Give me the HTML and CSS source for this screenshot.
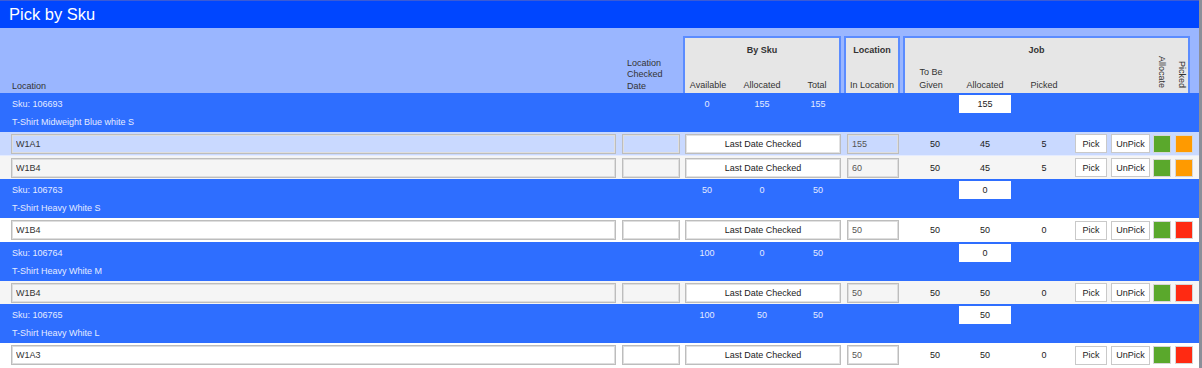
FILE: index.html
```html
<!DOCTYPE html>
<html lang="en">
<head>
  <meta charset="UTF-8">
  <title>Pick by Sku</title>
  <link rel="stylesheet" href="styles.css">
</head>
<body>
  <div id="pagina">
    <div class="titol">Pick by Sku</div>

    <div class="capcalera graella">
      <div class="cap-loc">Location</div>
      <div class="cap-data">Location<br>Checked<br>Date</div>
      <div class="grup grup-sku">
        <div class="grup-titol">By Sku</div>
        <div class="grup-cols">
          <span>Available</span><span>Allocated</span><span>Total</span>
        </div>
      </div>
      <div class="grup grup-loc">
        <div class="grup-titol">Location</div>
        <div class="grup-cols">
          <span>In Location</span>
        </div>
      </div>
      <div class="grup grup-job">
        <div class="grup-titol">Job</div>
        <div class="grup-cols">
          <span>To Be<br>Given</span><span>Allocated</span><span>Picked</span><span></span><span></span>
          <span class="vertical">Allocate</span><span class="vertical">Picked</span>
        </div>
      </div>
    </div>

    <!-- Sku 106693 -->
    <div class="sku graella">
      <div class="sku-codi">Sku: 106693</div>
      <div class="num c3">0</div>
      <div class="num c4">155</div>
      <div class="num c5">155</div>
      <div class="caixa">155</div>
      <div class="sku-nom">T-Shirt Midweight Blue white S</div>
    </div>
    <div class="fila graella seleccionada">
      <input class="camp" type="text" value="W1A1">
      <input class="camp" type="text" value="">
      <button class="boto-data">Last Date Checked</button>
      <input class="camp quantitat" type="text" value="155">
      <div class="valor c7">50</div>
      <div class="valor c8">45</div>
      <div class="valor c9">5</div>
      <button class="boto pick">Pick</button>
      <button class="boto unpick">UnPick</button>
      <div class="quadre verd"></div>
      <div class="quadre taronja"></div>
    </div>
    <div class="fila graella gris">
      <input class="camp" type="text" value="W1B4">
      <input class="camp" type="text" value="">
      <button class="boto-data">Last Date Checked</button>
      <input class="camp quantitat" type="text" value="60">
      <div class="valor c7">50</div>
      <div class="valor c8">45</div>
      <div class="valor c9">5</div>
      <button class="boto pick">Pick</button>
      <button class="boto unpick">UnPick</button>
      <div class="quadre verd"></div>
      <div class="quadre taronja"></div>
    </div>

    <!-- Sku 106763 -->
    <div class="sku graella">
      <div class="sku-codi">Sku: 106763</div>
      <div class="num c3">50</div>
      <div class="num c4">0</div>
      <div class="num c5">50</div>
      <div class="caixa">0</div>
      <div class="sku-nom">T-Shirt Heavy White S</div>
    </div>
    <div class="fila graella">
      <input class="camp" type="text" value="W1B4">
      <input class="camp" type="text" value="">
      <button class="boto-data">Last Date Checked</button>
      <input class="camp quantitat" type="text" value="50">
      <div class="valor c7">50</div>
      <div class="valor c8">50</div>
      <div class="valor c9">0</div>
      <button class="boto pick">Pick</button>
      <button class="boto unpick">UnPick</button>
      <div class="quadre verd"></div>
      <div class="quadre vermell"></div>
    </div>

    <!-- Sku 106764 -->
    <div class="sku graella">
      <div class="sku-codi">Sku: 106764</div>
      <div class="num c3">100</div>
      <div class="num c4">0</div>
      <div class="num c5">50</div>
      <div class="caixa">0</div>
      <div class="sku-nom">T-Shirt Heavy White M</div>
    </div>
    <div class="fila graella gris">
      <input class="camp" type="text" value="W1B4">
      <input class="camp" type="text" value="">
      <button class="boto-data">Last Date Checked</button>
      <input class="camp quantitat" type="text" value="50">
      <div class="valor c7">50</div>
      <div class="valor c8">50</div>
      <div class="valor c9">0</div>
      <button class="boto pick">Pick</button>
      <button class="boto unpick">UnPick</button>
      <div class="quadre verd"></div>
      <div class="quadre vermell"></div>
    </div>

    <!-- Sku 106765 -->
    <div class="sku graella">
      <div class="sku-codi">Sku: 106765</div>
      <div class="num c3">100</div>
      <div class="num c4">50</div>
      <div class="num c5">50</div>
      <div class="caixa">50</div>
      <div class="sku-nom">T-Shirt Heavy White L</div>
    </div>
    <div class="fila graella">
      <input class="camp" type="text" value="W1A3">
      <input class="camp" type="text" value="">
      <button class="boto-data">Last Date Checked</button>
      <input class="camp quantitat" type="text" value="50">
      <div class="valor c7">50</div>
      <div class="valor c8">50</div>
      <div class="valor c9">0</div>
      <button class="boto pick">Pick</button>
      <button class="boto unpick">UnPick</button>
      <div class="quadre verd"></div>
      <div class="quadre vermell"></div>
    </div>
  </div>
</body>
</html>
```

FILE: styles.css
```css
body {
  margin: 0;
  background: #fff;
  font-family: "Liberation Sans", Arial, sans-serif;
  font-size: 9px;
  color: #333;
}

#pagina {
  width: 1199px;
  height: 368px;
  overflow: hidden;
  border-right: 3px solid #8c8f99;
}

.titol {
  height: 27px;
  line-height: 26px;
  padding-left: 9px;
  border-top: 1px solid #3b5bd6;
  background: #0046ff;
  color: #fff;
  font-size: 16.5px;
}

/* --------------- Columnes ----------------- */

.graella {
  display: grid;
  grid-template-columns: 611px 64px 48px 62px 50px 58px 56px 56px 62px 34px 42px 22px 22px;
  padding-left: 8px;
}

.c3 { grid-column: 3; }
.c4 { grid-column: 4; }
.c5 { grid-column: 5; }
.c7 { grid-column: 7; }
.c8 { grid-column: 8; }
.c9 { grid-column: 9; }

/* --------------- Capcalera ----------------- */

.capcalera {
  height: 65px;
  padding-top: 8px;
  box-sizing: border-box;
  background: #9ab6ff;
}

.cap-loc {
  align-self: end;
  padding: 0 0 2px 4px;
}

.cap-data {
  align-self: end;
  padding: 0 0 1px 8px;
  line-height: 11.5px;
}

.grup {
  display: flex;
  flex-direction: column;
  justify-content: space-between;
  background: #e6e6e6;
  border: 2px solid #5b8cff;
  border-bottom: none;
}

.grup-sku { grid-column: 3 / 6; margin-right: 2px; }
.grup-loc { grid-column: 6; margin: 0 1px; }
.grup-job { grid-column: 7 / 14; margin: 0 5px 0 2px; }

.grup-titol {
  padding-top: 7px;
  text-align: center;
  font-weight: bold;
}

.grup-job .grup-titol {
  padding-right: 20px;
}

.grup-cols {
  display: grid;
  align-items: end;
  padding-bottom: 3px;
  text-align: center;
}

.grup-sku .grup-cols { grid-template-columns: 46px 62px 48px; }
.grup-loc .grup-cols { grid-template-columns: 1fr; }
.grup-job .grup-cols {
  grid-template-columns: 52px 56px 62px 34px 42px 22px 17px;
  line-height: 13px;
  padding-bottom: 1px;
}

.vertical {
  writing-mode: vertical-rl;
  justify-self: center;
  line-height: 10px;
  margin-bottom: 4px;
}

.grup-job .vertical:first-of-type {
  margin-right: 6px;
}

/* --------------- Files de sku ----------------- */

.sku {
  height: 39px;
  box-sizing: border-box;
  padding-top: 2px;
  grid-template-rows: 18px 18px;
  align-items: center;
  background: #2e6eff;
  color: #e4ebff;
}

.sku-codi {
  grid-column: 1;
  padding-left: 4px;
}

.sku-nom {
  grid-column: 1;
  grid-row: 2;
  padding-left: 4px;
}

.num {
  text-align: center;
}

.caixa {
  grid-column: 8;
  height: 18px;
  line-height: 18px;
  margin: 0 2px;
  background: #fff;
  color: #222;
  text-align: center;
}

/* --------------- Files de localitzacio ----------------- */

.fila {
  height: 24px;
  align-items: center;
  background: #fff;
}

.fila.gris {
  height: 23px;
  background: #f5f5f5;
}

.fila.seleccionada {
  background: #c9d9ff;
  border-bottom: 1px solid #e4ebff;
  height: 24px;
  box-sizing: border-box;
}

.camp {
  height: 20px;
  margin: 0 3px;
  padding: 0 4px;
  box-sizing: border-box;
  border: 1px solid #bdbdbd;
  box-shadow: inset 0 0 0 1px #dedede;
  background: transparent;
  font: inherit;
  color: #333;
  outline: none;
}

.camp.quantitat {
  margin: 0 2px 0 4px;
  color: #555;
}

.boto-data {
  grid-column: 3 / 6;
  height: 20px;
  margin: 0 2px;
  padding: 0;
  border: 1px solid #bdbdbd;
  box-shadow: inset 0 0 0 1px #e2e2e2;
  background: #fff;
  font: inherit;
  color: #222;
}

.valor {
  text-align: center;
  color: #1a1a1a;
}

.valor.c7 {
  padding-left: 12px;
}

.boto {
  height: 19px;
  padding: 0;
  border: 1px solid #c9c9c9;
  background: #fff;
  font: inherit;
  color: #222;
}

.boto.pick { margin-right: 2px; }
.boto.unpick { margin: 0 1px 0 2px; }

.quadre {
  width: 18px;
  height: 18px;
  margin-left: 2px;
  box-sizing: border-box;
  border: 1px solid #d6d6d6;
}

.verd { background: #5aa82c; }
.taronja { background: #ff9a00; }
.vermell { background: #ff2a12; }
```
